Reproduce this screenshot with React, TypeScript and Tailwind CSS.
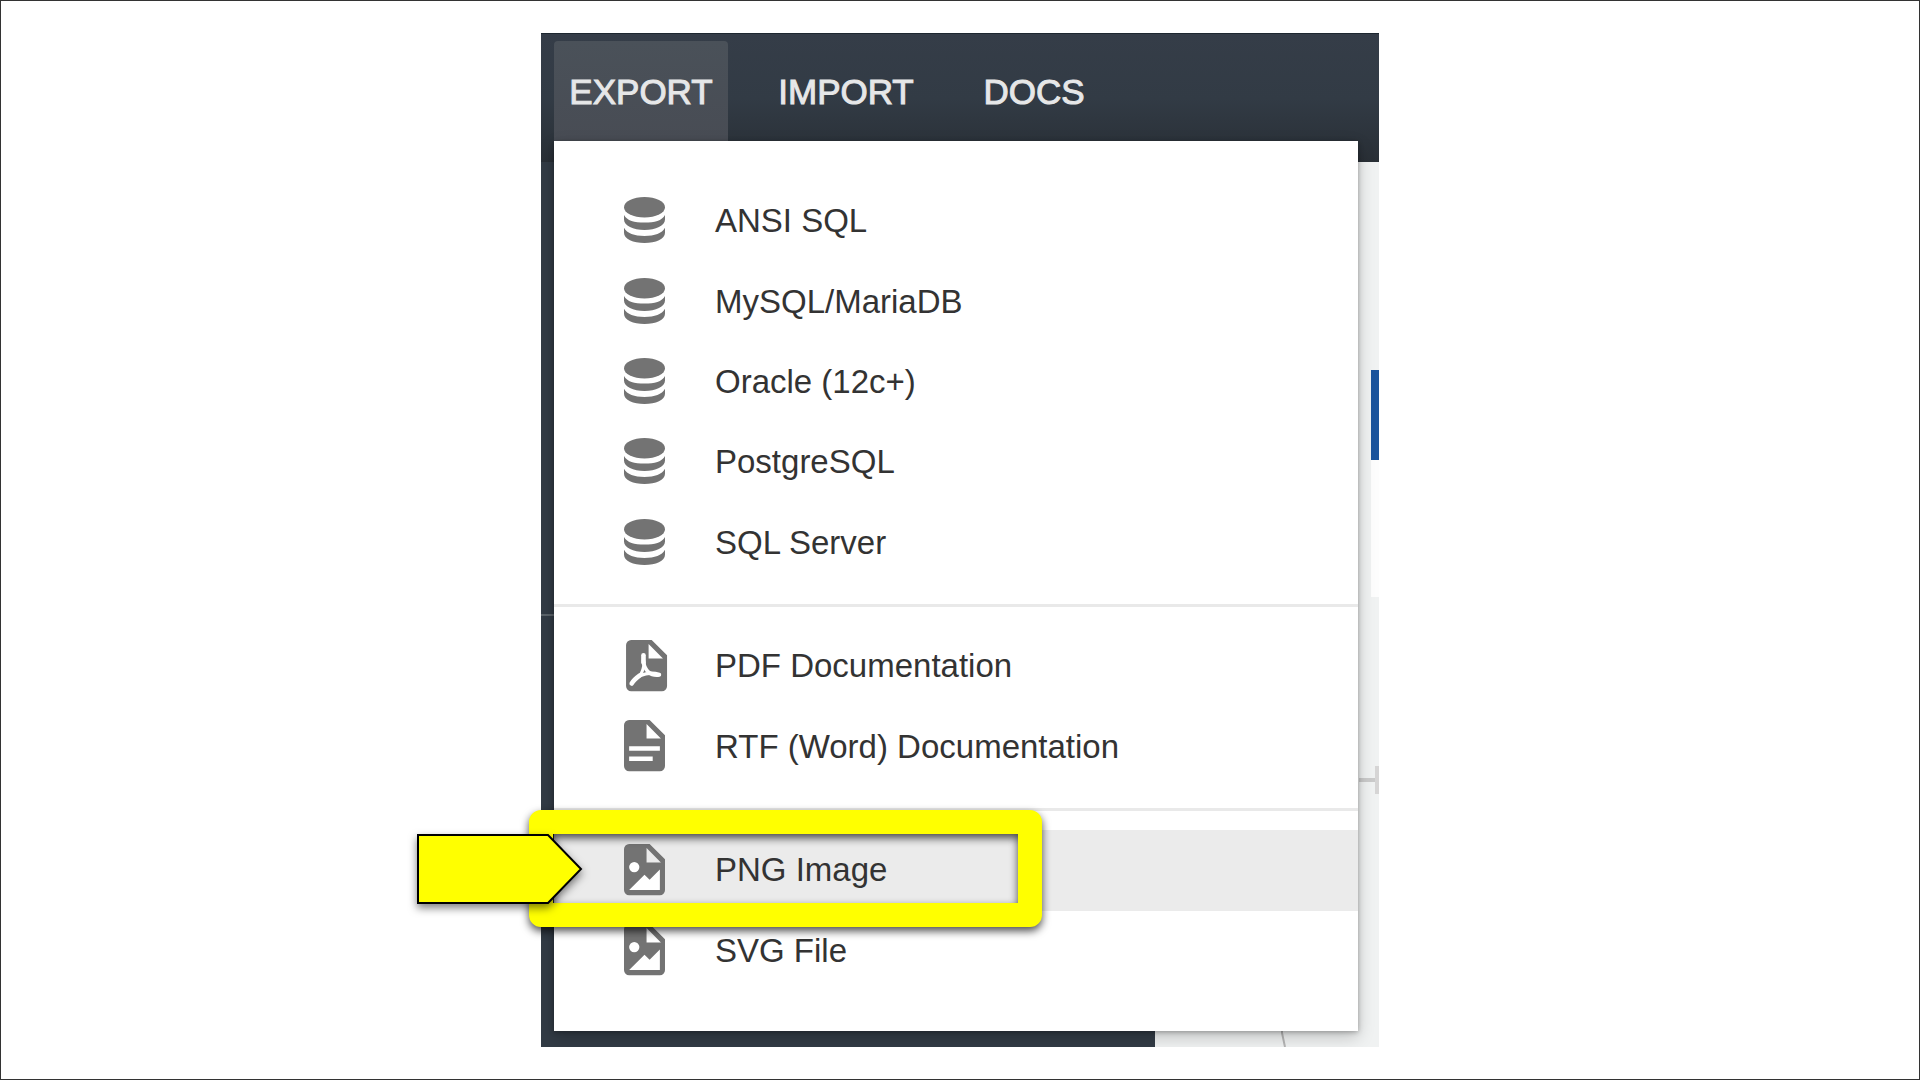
import React from "react";

type IconProps = { className?: string };

const DatabaseIcon = ({ className }: IconProps) => (
  <svg viewBox="0 0 40 47" className={className} fill="currentColor" aria-hidden="true">
    <ellipse cx="20" cy="10" rx="20" ry="10" />
    <path d="M0 17.500C3 23 10 25 20 25s17-2 20-7.500V22c0 6-9 10.300-20 10.300S0 28 0 22z" />
    <path d="M0 30C3 35.500 10 38 20 38s17-2.500 20-8V35c0 6-9 10-20 10S0 41 0 35z" />
  </svg>
);

const PageShape = () => (
  <path
    fillRule="evenodd"
    d="M5 0H25L40 15V45a5 5 0 0 1-5 5H5a5 5 0 0 1-5-5V5a5 5 0 0 1 5-5zM22 4V18H36z"
  />
);

const PdfIcon = ({ className }: IconProps) => (
  <svg viewBox="-2 0 40 52" className={className} fill="currentColor" overflow="visible" aria-hidden="true">
    <PageShape />
    <g fill="none" stroke="#fff" strokeLinecap="round" strokeLinejoin="round">
      <path d="M17 15V22" strokeWidth="4.500" />
      <path d="M17 20C17 25 18.500 28 22 31.500C25 34 29 34.500 32.500 34" strokeWidth="3.600" />
      <path d="M17.500 22C17.500 27 16 31 13.500 35C20 32 26 31.500 32.500 33.500" strokeWidth="3" />
      <path d="M13.500 34.500C10 37 7 39.500 5.500 42.500" strokeWidth="4.500" />
    </g>
  </svg>
);

const TextFileIcon = ({ className }: IconProps) => (
  <svg viewBox="0 0 40 52" className={className} fill="currentColor" aria-hidden="true">
    <PageShape />
    <path d="M5 25.500H35V30H5zM5 35.500H28V40H5z" fill="#fff" />
  </svg>
);

const ImageFileIcon = ({ className }: IconProps) => (
  <svg viewBox="0 0 40 52" className={className} fill="currentColor" aria-hidden="true">
    <PageShape />
    <circle cx="10" cy="22.500" r="5" fill="#fff" />
    <path d="M5 45L20 30L25 35L35 25V45z" fill="#fff" />
  </svg>
);

type Entry = { label: string; Icon: React.FC<IconProps>; active?: boolean };

const databases: Entry[] = [
  { label: "ANSI SQL", Icon: DatabaseIcon },
  { label: "MySQL/MariaDB", Icon: DatabaseIcon },
  { label: "Oracle (12c+)", Icon: DatabaseIcon },
  { label: "PostgreSQL", Icon: DatabaseIcon },
  { label: "SQL Server", Icon: DatabaseIcon },
];
const documents: Entry[] = [
  { label: "PDF Documentation", Icon: PdfIcon },
  { label: "RTF (Word) Documentation", Icon: TextFileIcon },
];
const images: Entry[] = [
  { label: "PNG Image", Icon: ImageFileIcon, active: true },
  { label: "SVG File", Icon: ImageFileIcon },
];

const MenuGroup = ({ entries, className }: { entries: Entry[]; className: string }) => (
  <div className={`grid auto-rows-fr ${className}`}>
    {entries.map(({ label, Icon, active }) => (
      <button
        key={label}
        role="menuitem"
        className={`flex w-full items-center pl-[70px] text-left text-[33px] leading-10 text-[#333] ${
          active ? "bg-[#ebebeb]" : ""
        }`}
      >
        <Icon className="mr-[50px] w-[41px] shrink-0 text-[#737373]" />
        <span>{label}</span>
      </button>
    ))}
  </div>
);

const Separator = () => <div role="separator" className="mt-[21px] mb-[19px] h-[3px] bg-[#e9e9e9]" />;

const Backdrop = () => (
  <div className="absolute inset-0 flex" aria-hidden="true">
    <div className="w-[614px] bg-[#323b45] pt-[452px]">
      <div className="h-[2px] bg-[#5b636a]" />
    </div>
    <div className="relative flex-1 bg-[#f0f2f2]">
      <div className="absolute top-[208px] right-0 h-[90px] w-2 bg-[#1c559c]" />
      <div className="absolute top-[298px] right-0 h-[137px] w-2 bg-[#fdfdfd]" />
      <div className="absolute top-[616px] right-0 h-1 w-5 bg-[#cbcbcb]" />
      <div className="absolute top-[604px] right-0 h-7 w-1 bg-[#d6d5d5]" />
      <svg className="absolute bottom-0 left-[125px] h-5 w-2" viewBox="0 0 8 20">
        <path d="M2 0V6L5 20" fill="none" stroke="#b5b5b5" strokeWidth="2" />
      </svg>
    </div>
  </div>
);

const Callout = () => (
  <div className="pointer-events-none absolute top-[777px] -left-3" aria-hidden="true">
    <div className="h-[117px] w-[513px] rounded-xl border-[24px] border-[#ffff00] drop-shadow-[0_4px_4px_rgba(0,0,0,0.7)]" />
    <svg
      className="absolute top-[22px] -left-[114px] h-[74px] w-[168px] overflow-visible drop-shadow-[0_4px_4px_rgba(0,0,0,0.5)]"
      viewBox="0 0 168 74"
    >
      <path d="M3 3H133L166 37L133 71H3z" fill="#ff0" stroke="#000" strokeWidth="2" />
    </svg>
  </div>
);

export default function App() {
  return (
    <div className="flex min-h-screen items-start justify-center border border-[#333] bg-white pt-8 font-['Liberation_Sans',Arial,sans-serif]">
      <main className="relative w-full max-w-[838px]">
        <div className="overflow-hidden">
          <header className="h-[129px] border-t border-[#1d2730] bg-gradient-to-b from-[#353d48] via-[#323b45] to-[#292f36] pt-[7px] pl-[13px]">
            <nav className="flex h-[101px] text-[35px] leading-10 text-[#e6e7e8] [-webkit-text-stroke:1px_#e6e7e8]">
              <button className="w-[174px] rounded-t bg-gradient-to-b from-[#4a5159] to-[#484c54]">EXPORT</button>
              <button className="ml-[31px] w-[174px]">IMPORT</button>
              <button className="ml-[31px] w-[140px]">DOCS</button>
            </nav>
          </header>
          <div className="relative flow-root px-[13px] pb-4">
            <Backdrop />
            <div
              role="menu"
              className="relative -mt-[21px] mr-2 bg-white py-10 shadow-[0_6px_16px_rgba(0,0,0,0.2),0_1px_5px_rgba(0,0,0,0.3)]"
            >
              <MenuGroup entries={databases} className="h-[402px]" />
              <Separator />
              <MenuGroup entries={documents} className="h-[161px]" />
              <Separator />
              <MenuGroup entries={images} className="h-[161px]" />
            </div>
          </div>
        </div>
        <Callout />
      </main>
    </div>
  );
}
